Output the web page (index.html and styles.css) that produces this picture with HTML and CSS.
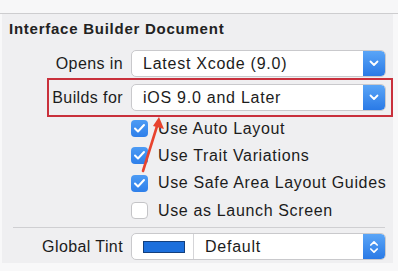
FILE: index.html
```html
<!DOCTYPE html>
<html lang="en">
<head>
    <meta charset="UTF-8">
    <title>Interface Builder Document</title>
    <link rel="stylesheet" href="styles.css">
</head>
<body>
<div class="g-top"></div>
<div class="g-panel">
    <h4 class="m-title">Interface Builder Document</h4>

    <div class="m-row m-row-first">
        <span class="u-label">Opens in</span>
        <div class="u-popup">
            <span class="u-value">Latest Xcode (9.0)</span>
            <span class="u-btn">
                <svg width="10" height="7" viewBox="0 0 10 7"><path d="M1.5 1.5 L5 5 L8.5 1.5" fill="none" stroke="#fff" stroke-width="1.8" stroke-linecap="round" stroke-linejoin="round"/></svg>
            </span>
        </div>
    </div>

    <div class="m-row">
        <span class="u-label">Builds for</span>
        <div class="u-popup">
            <span class="u-value">iOS 9.0 and Later</span>
            <span class="u-btn">
                <svg width="10" height="7" viewBox="0 0 10 7"><path d="M1.5 1.5 L5 5 L8.5 1.5" fill="none" stroke="#fff" stroke-width="1.8" stroke-linecap="round" stroke-linejoin="round"/></svg>
            </span>
        </div>
    </div>

    <ul class="m-checks">
        <li><span class="u-check f-on"><svg width="13" height="11" viewBox="0 0 13 11"><path d="M2 5.5 L5 8.5 L11 2" fill="none" stroke="#fff" stroke-width="2" stroke-linecap="round" stroke-linejoin="round"/></svg></span>Use Auto Layout</li>
        <li><span class="u-check f-on"><svg width="13" height="11" viewBox="0 0 13 11"><path d="M2 5.5 L5 8.5 L11 2" fill="none" stroke="#fff" stroke-width="2" stroke-linecap="round" stroke-linejoin="round"/></svg></span>Use Trait Variations</li>
        <li><span class="u-check f-on"><svg width="13" height="11" viewBox="0 0 13 11"><path d="M2 5.5 L5 8.5 L11 2" fill="none" stroke="#fff" stroke-width="2" stroke-linecap="round" stroke-linejoin="round"/></svg></span>Use Safe Area Layout Guides</li>
        <li><span class="u-check"></span>Use as Launch Screen</li>
    </ul>

    <div class="m-sep"></div>

    <div class="m-row">
        <span class="u-label">Global Tint</span>
        <div class="u-popup">
            <span class="u-swatch"><i></i></span>
            <span class="u-value">Default</span>
            <span class="u-btn">
                <svg width="10" height="16" viewBox="0 0 10 16"><path d="M1.8 6 L5 2.8 L8.2 6 M1.8 10 L5 13.2 L8.2 10" fill="none" stroke="#fff" stroke-width="1.7" stroke-linecap="round" stroke-linejoin="round"/></svg>
            </span>
        </div>
    </div>

    <!-- annotation: red box + arrow -->
    <div class="u-mark"></div>
    <svg class="u-arrow" width="40" height="70" viewBox="0 0 40 70">
        <path d="M4 56 L19 8" stroke="#e8432e" stroke-width="2.6" stroke-linecap="round"/>
        <path d="M20 2 L25 14 L14 11 Z" fill="#e8432e"/>
    </svg>
</div>
</body>
</html>
```

FILE: styles.css
```css
* {
    padding: 0;
    margin: 0;
    box-sizing: border-box;
}
body {
    background-color: #f8f8f9;
    font-family: "Liberation Sans", Arial, sans-serif;
    color: #1c1c1c;
    width: 398px;
    height: 271px;
    overflow: hidden;
}
.g-top {
    height: 14px;
    border-bottom: 1px solid #cdcdcf;
    background-color: #f7f7f8;
}
.g-panel {
    position: relative;
    margin-left: 2px;
    width: 391px;
    height: 249px;
    background-color: #efeff1;
    padding-top: 6px;
}
.m-title {
    font-size: 15px;
    font-weight: bold;
    letter-spacing: 0.75px;
    padding-left: 7px;
    line-height: 18px;
    color: #222;
}
.m-row {
    display: flex;
    align-items: center;
    height: 27px;
    margin-top: 7px;
}
.m-row-first {
    margin-top: 12px;
}
.u-label {
    width: 121px;
    text-align: right;
    font-size: 16px;
    letter-spacing: 0.4px;
    margin-right: 8px;
}
.u-popup {
    display: flex;
    align-items: center;
    width: 255px;
    height: 27px;
    background-color: #fff;
    border: 1px solid #c9c9cc;
    border-radius: 5px;
    overflow: hidden;
}
.u-value {
    flex: 1;
    padding-left: 11px;
    font-size: 16px;
    letter-spacing: 0.75px;
}
.u-btn {
    width: 22px;
    height: 25px;
    background: linear-gradient(#5aa5f7, #2a7ae6);
    display: flex;
    align-items: center;
    justify-content: center;
    border-radius: 0 4px 4px 0;
}
.u-swatch {
    width: 62px;
    height: 25px;
    border-right: 1px solid #d5d5d8;
    display: flex;
    align-items: center;
    padding-left: 11px;
}
.u-swatch i {
    display: block;
    width: 42px;
    height: 12px;
    background-color: #1c6fdc;
    border: 1px solid #123f7d;
}
.m-checks {
    list-style: none;
    margin-top: 4px;
}
.m-checks li {
    display: flex;
    align-items: center;
    height: 27.3px;
    padding-left: 129px;
    font-size: 16px;
    letter-spacing: 0.65px;
}
.u-check {
    width: 17px;
    height: 17px;
    margin-right: 10px;
    border-radius: 4px;
    background-color: #fff;
    border: 1px solid #c4c4c7;
    display: flex;
    align-items: center;
    justify-content: center;
}
.u-check.f-on {
    border: none;
    background: linear-gradient(#4c9bf4, #2e7fea);
}
.m-sep {
    margin: 3px 8px 0 11px;
    border-top: 1px solid #cfcfd2;
}
.m-sep + .m-row {
    margin-top: 5px;
}
.u-mark {
    position: absolute;
    left: 45px;
    top: 64px;
    width: 346px;
    height: 39px;
    border: 2px solid #c9303c;
}
.u-arrow {
    position: absolute;
    left: 137px;
    top: 101px;
}
```
